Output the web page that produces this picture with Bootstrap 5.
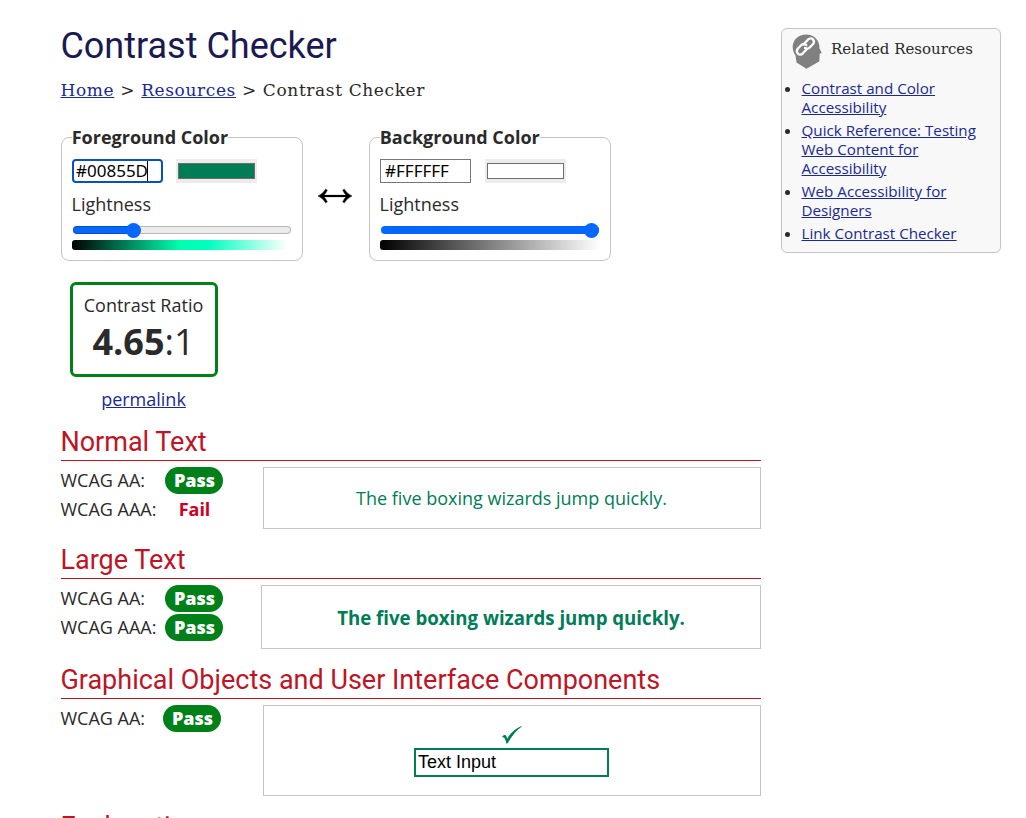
<!DOCTYPE html>
<html lang="en">
<head>
<meta charset="utf-8">
<meta name="viewport" content="width=device-width, initial-scale=1">
<title>Contrast Checker</title>
<link href="https://cdn.jsdelivr.net/npm/bootstrap@5.3.0/dist/css/bootstrap.min.css" rel="stylesheet">
<style>
body{font-family:"Open Sans",sans-serif;font-size:18px;line-height:29px;color:#2a2a2a;height:818px;overflow:hidden}
a{color:#1b2a90}
.page{padding:28px 25px 0 61px}
.main-col{width:700px}
h1{font:400 36px/36px Roboto,sans-serif;color:#1a1a50;text-indent:-.6px}
.slab{font-family:"DejaVu Serif",serif}
.crumbs{font-size:17px;line-height:24px;margin-top:14px;letter-spacing:.62px;text-indent:-.5px}
.tool-row{margin-top:35px}
.color-box{width:242px;height:124px;border:1px solid #c4c4c4;border-radius:8px;padding:0 10px}
.color-box .title{font-size:18px;font-weight:700;line-height:24px;margin-top:-13px;height:24px;text-indent:-.3px}
.color-box .title span{background:#fff}
.fields{margin-top:10px}
.lightness{line-height:24px;margin-top:9px;height:30px;text-indent:-.5px}
.hex{width:91px;height:24px;border:1px solid #767676;padding:0 4px 2px;font:17px/20px "Noto Sans",sans-serif;color:#000;border-radius:0;outline:0}
.hex.active{border:2px solid #0a50b8;border-radius:4px;padding:0 2px 2px}
.caret{left:75px;top:2px;width:1px;height:20px;background:#000}
.swatch{width:81px;height:24px;background:#ececec;padding:4px 2px;margin-left:14px}
.swatch.fore{margin-left:13px}
.swatch span{display:block;height:16px;border:1px solid #6e6e6e}
input[type=range]{appearance:none;display:block;width:220px;height:16px;margin:0;background:none;padding:0 1px}
input[type=range]::-webkit-slider-runnable-track{height:8px;border-radius:4px;background:linear-gradient(90deg,#0567fd var(--fill),#ebebeb var(--fill));box-shadow:inset 0 0 0 1px rgba(0,0,0,.22)}
input[type=range].full::-webkit-slider-runnable-track{box-shadow:none}
input[type=range]::-webkit-slider-thumb{appearance:none;width:15px;height:15px;margin-top:-3.5px;border-radius:50%;background:#0567fd}
.ramp{height:10px;width:220px;border-radius:3px;margin-top:2px}
.ratio-box{width:148px;height:95px;border:3px solid #008018;border-radius:6px;margin:21px 0 0 9px;padding:6px 1px 0 0}
.ratio-box .value{font-size:36px;line-height:44px}
.perma{width:147px;margin:8px 0 0 9px}
h2{font:400 27px/36px Roboto,sans-serif;color:#bd1526;border-bottom:1px solid #bd1526;margin:0 0 6px;height:37px;width:700px;text-indent:-.6px}
.result{margin-bottom:13px}
.grade{height:29px}
.grade .lbl{width:104px;line-height:27px;text-indent:-.5px}
.grade.near .lbl{width:102px}
.pill{height:27px;width:58px;border-radius:14px;background:#008018;color:#fff;font-weight:800;line-height:27px;text-align:center;padding-left:1px}
.pill.fail{background:none;color:#cc0022;font-weight:700}
.sample{border:1px solid #c4c4c4;color:#007c57;width:498px}
.sample.normal{height:62px;padding-right:1px}
.sample.big{width:500px;height:64px;font-size:18.67px;font-weight:700}
.sample.ui{height:91px;padding:1px 1px 0 0}
.related{width:220px;height:225px;border:1px solid #c4c4c4;border-radius:6px;background:#f8f8f8;font-size:15.2px;line-height:19px;padding-top:5px}
.related .head{height:45px;padding-left:10px}
.related .head span{font-size:15px;line-height:30px;margin-left:9px}
.related ul{padding-left:19.5px;margin:0}
.related li{margin-bottom:4px}
.demo{width:195px;height:29px;border:2px solid #007c57;font:18px "Liberation Sans",sans-serif;color:#000;padding:0 2px;margin-top:4px;border-radius:0}
</style>
</head>
<body>
<div class="page d-flex justify-content-between align-items-start">
<main class="main-col">
<h1 class="m-0">Contrast Checker</h1>
<nav class="crumbs slab"><a href="#">Home</a> &gt; <a href="#">Resources</a> &gt; Contrast Checker</nav>
<div class="tool-row d-flex">
<section class="color-box">
<div class="title"><span>Foreground Color</span></div>
<div class="fields d-flex"><div class="position-relative d-flex"><input class="hex active" value="#00855D" aria-label="Foreground hex"><i class="caret position-absolute"></i></div><div class="swatch fore"><span style="background:#007c57"></span></div></div>
<div class="lightness">Lightness</div>
<input type="range" value="26" style="--fill:28%" aria-label="Foreground lightness">
<div class="ramp" style="background:linear-gradient(90deg,#000,#00ffaf 49%,#00ffc0 62%,#fff 98%)"></div>
</section>
<div class="d-flex justify-content-center" style="width:66px;padding:49px 2px 0 0"><svg width="34" height="20" viewBox="0 0 34 20"><path d="M2 10H32" stroke="#000" stroke-width="2.2"/><path d="M0 10Q5.500 7.500 7.500 3.200L9.300 4.100Q7.800 8 5 10Q7.800 12 9.300 15.900L7.500 16.800Q5.500 12.500 0 10ZM34 10Q28.500 7.500 26.500 3.200L24.700 4.100Q26.200 8 29 10Q26.200 12 24.700 15.900L26.500 16.800Q28.500 12.500 34 10Z" stroke="#000" stroke-width=".5"/></svg></div>
<section class="color-box">
<div class="title"><span>Background Color</span></div>
<div class="fields d-flex"><input class="hex" value="#FFFFFF" aria-label="Background hex"><div class="swatch"><span style="background:#fff"></span></div></div>
<div class="lightness">Lightness</div>
<input class="full" type="range" value="100" style="--fill:100%" aria-label="Background lightness">
<div class="ramp" style="background:linear-gradient(90deg,#000,#fff)"></div>
</section>
</div>
<div class="ratio-box text-center"><div>Contrast Ratio</div><div class="value"><b>4.65</b>:1</div></div>
<div class="perma text-center"><a href="#">permalink</a></div>
<h2 style="margin-top:10px">Normal Text</h2>
<div class="result d-flex justify-content-between">
<div><div class="grade d-flex"><span class="lbl">WCAG AA:</span><span class="pill">Pass</span></div><div class="grade d-flex"><span class="lbl">WCAG AAA:</span><span class="pill fail">Fail</span></div></div>
<div class="sample normal d-flex align-items-center justify-content-center">The five boxing wizards jump quickly.</div>
</div>
<h2>Large Text</h2>
<div class="result d-flex justify-content-between">
<div><div class="grade d-flex"><span class="lbl">WCAG AA:</span><span class="pill">Pass</span></div><div class="grade d-flex"><span class="lbl">WCAG AAA:</span><span class="pill">Pass</span></div></div>
<div class="sample big d-flex align-items-center justify-content-center">The five boxing wizards jump quickly.</div>
</div>
<h2>Graphical Objects and User Interface Components</h2>
<div class="result d-flex justify-content-between">
<div class="grade near d-flex"><span class="lbl">WCAG AA:</span><span class="pill">Pass</span></div>
<div class="sample ui d-flex flex-column align-items-center justify-content-center">
<svg width="20" height="18" viewBox="0 0 20 18" fill="#007c57"><path d="M.5 10.200Q2.800 8.300 4 9.600Q4.700 10.400 5.100 12.800Q10.500 3.500 19.500 0L19.800.4Q11.500 6.300 6.200 16.600L4.600 17.900Q3.400 13.500 2.500 12Q1.800 10.900.3 11.200Z"/></svg>
<input class="demo" value="Text Input" aria-label="Sample input">
</div>
</div>
<h2>Explanation</h2>
</main>
<aside class="related">
<div class="head d-flex align-items-start"><svg width="30" height="36" viewBox="0 0 30 36"><path d="M14 .5C21 .5 26.500 5 27.300 11.500L27.500 14.500L29.600 18.500Q29.600 19.500 27.700 19.700L27.300 27Q27 28 25.800 28.300L14.500 34.800L4.500 28.500L3.500 21.500C1.500 18.800.7 16 .7 13C.7 5.600 6.600.5 14 .5Z" fill="#808080"/><g fill="none" stroke="#fff" stroke-width="2.300" stroke-linecap="round" stroke-linejoin="round"><path d="M11.600 10.400L15.900 5.700Q18.600 3.300 21 5.400Q23 7.800 20.900 10.200L17.500 13.600Q15.500 15.400 13 13.900"/><path d="M14.300 11Q11.500 8.900 9.100 11.200L5.700 14.800Q3.700 17.500 6 19.800Q8.500 21.700 11 19.300L14.600 15.300"/></g></svg><span class="slab">Related Resources</span></div>
<ul><li><a href="#">Contrast and Color Accessibility</a></li><li><a href="#">Quick Reference: Testing Web Content for Accessibility</a></li><li><a href="#">Web Accessibility for Designers</a></li><li><a href="#">Link Contrast Checker</a></li></ul>
</aside>
</div>
<script src="https://cdn.jsdelivr.net/npm/bootstrap@5.3.0/dist/js/bootstrap.bundle.min.js"></script>
</body>
</html>
